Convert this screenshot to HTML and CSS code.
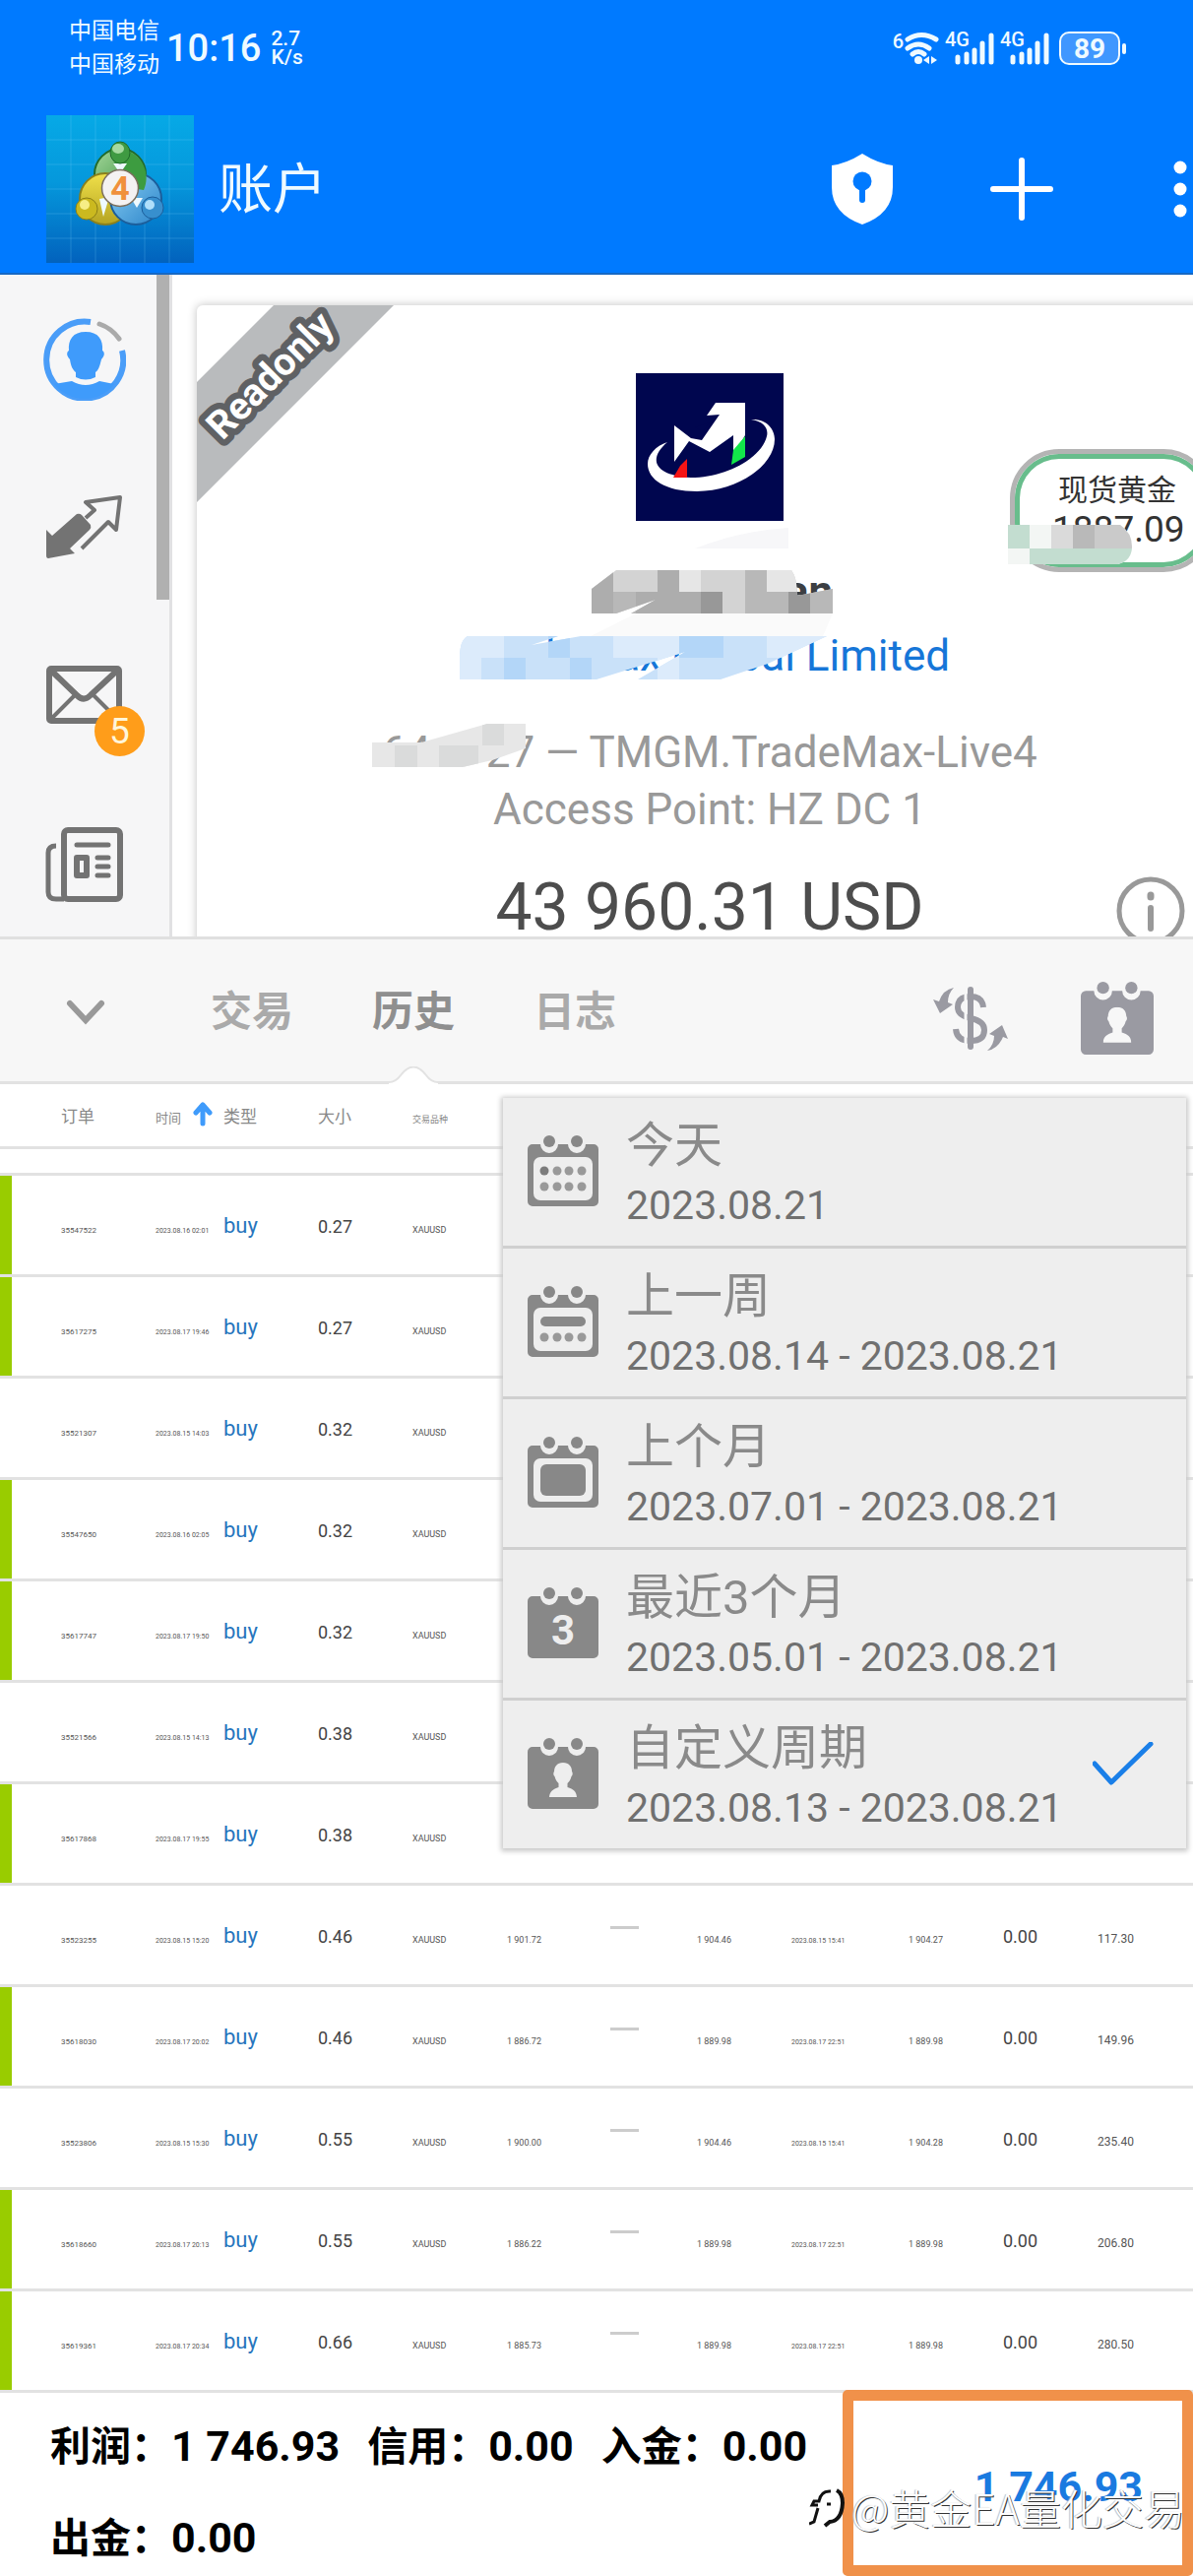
FILE: index.html
```html
<!DOCTYPE html>
<html lang="zh-CN">
<head>
<meta charset="utf-8">
<meta name="viewport" content="width=device-width, initial-scale=1">
<title>账户</title>
<link rel="stylesheet" href="styles.css">
</head>
<body>
<svg class="defs" aria-hidden="true">
  <defs>
    <linearGradient id="sky" x1="0" y1="0" x2="0" y2="1"><stop offset="0" stop-color="#06a9e6"/><stop offset=".45" stop-color="#0598dc"/><stop offset="1" stop-color="#0262bd"/></linearGradient>
    <linearGradient id="green" x1="0" y1="0" x2="1" y2="1"><stop offset="0" stop-color="#a5d79b"/><stop offset="1" stop-color="#2b8a35"/></linearGradient>
    <linearGradient id="gold" x1="0" y1="0" x2="0" y2="1"><stop offset="0" stop-color="#f0e04a"/><stop offset="1" stop-color="#b5a421"/></linearGradient>
    <linearGradient id="blue" x1="0" y1="0" x2="1" y2="1"><stop offset="0" stop-color="#8bd0f5"/><stop offset="1" stop-color="#2b84c9"/></linearGradient>
    <symbol id="cal" viewBox="0 0 72 72">
      <path d="M5 9h8a9 9 0 0 0 18 0h10a9 9 0 0 0 18 0h8a5 5 0 0 1 5 5v53a5 5 0 0 1-5 5H5a5 5 0 0 1-5-5V14a5 5 0 0 1 5-5z"/>
      <circle cx="22" cy="6" r="6"/><circle cx="50" cy="6" r="6"/>
    </symbol>
    <symbol id="bust" viewBox="0 0 28 36"><path d="M14 0c6 0 9 4 9 9 1 1 1 4-.5 5-1 4-3 6-4 7v4c6 2 9 4 9.500 10H0c.5-6 4-8 9.500-10v-4c-1-1-3-3-4-7-1.500-1-1.500-4-.5-5 0-5 3-9 9-9z"/></symbol>
    <symbol id="bars" viewBox="0 0 46 34">
      <path d="M9 26v5M18 23v8M26 19v12M34 12v19M43 4v27" fill="none" stroke="currentColor" stroke-width="5" stroke-linecap="round"/>
    </symbol>
  </defs>
</svg>

<header class="top">
  <div class="status">
    <div class="carriers"><span>中国电信</span><span>中国移动</span></div>
    <time class="clock">10:16</time>
    <div class="speed"><span>2.7</span><span>K/s</span></div>
    <div class="signals">
      <span class="wifi"><small>6</small>
        <svg width="36" height="34" viewBox="0 0 36 34"><g fill="none" stroke="currentColor" stroke-width="5" stroke-linecap="round"><path d="M4 8q14-9 29 0M4 17q11-8 22 0M9 23q6-5 12 0"/></g><circle cx="15" cy="29" r="4"/><path d="M26 25v8l-6-4zM28 25v8l6-4z"/></svg>
      </span>
      <span class="cell"><small>4G</small><svg width="46" height="34"><use href="#bars"/></svg></span>
      <span class="cell"><small>4G</small><svg width="46" height="34"><use href="#bars"/></svg></span>
      <span class="battery">89</span>
    </div>
  </div>
  <div class="appbar">
    <svg class="applogo" viewBox="0 0 150 150" aria-hidden="true">
      <path fill="url(#sky)" d="M0 0h150v150H0z"/>
      <path d="M25 0v150M50 0v150M75 0v150M100 0v150M125 0v150M0 25h150M0 50h150M0 75h150M0 100h150M0 125h150" stroke="#8fdcff" stroke-opacity=".22" fill="none"/>
      <circle cx="75" cy="60" r="26" fill="url(#green)" stroke="#236b2a" stroke-width="2"/>
      <circle cx="60" cy="85" r="26" fill="url(#gold)" stroke="#8a801c" stroke-width="2"/>
      <circle cx="91" cy="85" r="26" fill="url(#blue)" stroke="#1c5e9b" stroke-width="2"/>
      <path d="M84 37c15 6 22 24 15 39l-13-2c-2-14-9-22-18-25z" fill="#3d9c40"/>
      <path d="M54 85l10-2-6 20zM86 84h12l-6 10zM68 49h14l-7 10z" fill="#eefaff"/>
      <ellipse cx="75" cy="38" rx="10" ry="11" fill="#3f9a42" stroke="#1f6a2a"/><ellipse cx="73" cy="34" rx="6" ry="5" fill="#a5d9a0"/>
      <circle cx="41" cy="95" r="11" fill="#cbb91f" stroke="#8b7f17"/><circle cx="39" cy="91" r="5" fill="#f7ee86"/>
      <circle cx="108" cy="94" r="11" fill="#378fce" stroke="#1c5e9b"/><circle cx="105" cy="91" r="5" fill="#b0dffb"/>
      <circle cx="75" cy="74" r="18.500" fill="#f4f2f2" stroke="#7b6e5c" stroke-width="1.500"/>
      <text x="75" y="86" text-anchor="middle" class="logo-four">4</text>
    </svg>
    <h1>账户</h1>
    <div class="actions">
      <button type="button" aria-label="安全"><svg width="64" height="74" viewBox="0 0 64 74"><path fill="#fff" d="M32 1q16 10 31 12v22q0 27-31 38Q1 62 1 35V13Q16 11 32 1z"/><circle cx="32" cy="29" r="9.500" fill="#007aff"/><path d="M32 32v16" stroke="#007aff" stroke-width="6" stroke-linecap="round"/></svg></button>
      <button type="button" aria-label="添加"><svg width="64" height="64" viewBox="0 0 64 64"><path d="M32 3v58M3 32h58" stroke="#fff" stroke-width="6" stroke-linecap="round"/></svg></button>
      <button type="button" aria-label="更多"><svg width="14" height="58" viewBox="0 0 14 58" fill="#fff"><circle cx="7" cy="7" r="6.500"/><circle cx="7" cy="29" r="6.500"/><circle cx="7" cy="51" r="6.500"/></svg></button>
    </div>
  </div>
</header>

<main>
  <section class="pane">
    <nav class="side" aria-label="导航">
      <a href="#account" aria-label="账户"><svg width="84" height="84" viewBox="0 0 84 84">
        <path d="M48 4A39 39 0 1 0 80 33" fill="none" stroke="#4a9df8" stroke-width="6"/><path d="M57 6q12 4 20 15" fill="none" stroke="#aaa" stroke-width="5" stroke-linecap="round"/>
        <path fill="#3f9bfb" d="M43 14c13 0 18 8 17 19 3 2 2 6-1 9-2 8-3 11-6 13v5q-10 5-20 0v-5c-3-2-5-6-6-13-3-3-4-7-1-9-1-11 4-19 17-19zM11 67l18-3q14 8 28 0l15 3q-12 15-30 15T11 67z"/></svg></a>
      <a href="#trade" aria-label="交易"><svg width="78" height="68" viewBox="0 0 78 68"><path fill="#737373" d="M31 20q3-1 5 1l9 10q1 3-1 5L24 55l5 5-27 5q-2 0-2-3V36l6 6z"/><path fill="none" stroke="#737373" stroke-width="4" stroke-linejoin="round" d="M40 24l9-8-9-8 35-5-4 33-8-8-27 27"/></svg></a>
      <a class="mail" href="#mail" aria-label="邮箱"><svg width="78" height="60" viewBox="0 0 78 60" fill="none" stroke="#737373" stroke-width="6"><rect x="3" y="3" width="71" height="53" rx="2"/><path d="M4 4l27 26q7 7 14 0L73 4"/><path d="M4 55l25-25M73 55L48 30" stroke-width="4"/></svg><span class="badge">5</span></a>
      <a href="#news" aria-label="新闻"><svg width="80" height="76" viewBox="0 0 80 76"><g fill="none" stroke="#737373"><rect x="19" y="3" width="57" height="70" rx="4" stroke-width="6"/><path d="M11 19q-8 0-8 7v40q0 7 8 7h8" stroke-width="5"/><path d="M32 18h32M53 31h11M53 40h11M53 49h11" stroke-width="5" stroke-linecap="round"/><rect x="32" y="31" width="10" height="18" stroke-width="6" stroke-linejoin="round"/></g></svg></a>
    </nav>
    <div class="stage">
      <article class="card" id="account">
        <div class="ribbon"><svg width="200" height="200" viewBox="0 0 200 200"><path d="M78 0h122L0 200V78z" fill="#b9bbbd"/><text x="75" y="84" text-anchor="middle" transform="rotate(-45 75 72)">Readonly</text></svg></div>
        <svg class="broker" width="150" height="150" viewBox="0 0 150 150" aria-hidden="true">
          <path fill="#00064f" d="M0 0h150v150H0z"/>
          <path fill="#fff" fill-rule="evenodd" d="M117 47c16-1 24 10 24 20 0 27-38 53-79 53-32 0-50-12-50-28 0-9 8-18 20-22-20 17-14 34 24 36 35 0 72-20 77-42 2-8-3-15-16-17z"/>
          <path fill="#fff" d="M39 53l17 13 11 2 18-26-13 1 9-13h30v33l-12 21V63L75 80l-21-11-15 21z"/>
          <path fill="#00064f" d="M60 55l15-5-7 9z" opacity=".5"/>
          <path fill="#f51414" d="M52 87v19H38l7-12z"/><path fill="#12e64a" d="M111 64v21l-14 8 2-15z"/>
        </svg>
        <h2 class="owner"><span>an</span></h2>
        <a class="company" href="#company">TradeMax Global Limited</a>
        <p class="server">64<i class="masked"></i>27 — TMGM.TradeMax-Live4</p>
        <p class="point">Access Point: HZ DC 1</p>
        <div class="balance"><strong>43 960.31 USD</strong><button type="button" aria-label="信息"><svg width="70" height="70" viewBox="0 0 70 70" fill="none" stroke="#999" stroke-width="5"><circle cx="35" cy="35" r="32"/><path d="M35 32v21" stroke-width="6" stroke-linecap="round"/><path d="M35 19v2" stroke-width="7" stroke-linecap="round"/></svg></button></div>
      </article>
      <aside class="bubble"><span>现货黄金</span><span class="quote">1887.09</span></aside>
      <svg class="mosaic" width="1012" height="641" viewBox="200 310 1012 641" aria-hidden="true">
        <defs>
          <clipPath id="c1"><path d="M601 598l25-19h178q6 8 6 26l36-7v25h-205l25-14-40 14h-25z"/></clipPath>
          <clipPath id="c2"><path d="M467 668q0-18 8-22h92l-27 9 50-9h250l-60 28-48 16h-84l48-28-90 28H467z"/></clipPath>
          <clipPath id="c3"><path d="M378 754h50l67-19h39v25l-34 12-30 7H378z"/></clipPath>
          <clipPath id="c4"><path d="M1024 533h114q12 8 12 22t-14 18H1024z"/></clipPath>
        </defs>
        <path fill="#f7f7f9" d="M706 557q45-18 95-21v21z"/>
        <path fill="#fafafa" d="M646 623h200l-10 23H600z"/>
        <g clip-path="url(#c1)">
          <path fill="#d3d3d3" d="M601 579h250v44H601z"/><path fill="#adadad" d="M601 579h22v44h-22zM668 579h22v22h-22zM646 601h66v22h-66z"/><path fill="#e6e6e6" d="M690 579h22v22h-22zM779 579h30v22h-30z"/><path fill="#989898" d="M712 601h22v22h-22zM801 601h22v22h-22z"/><path fill="#b8b8b8" d="M757 579h22v22h-22zM757 601h44v22h-44zM823 598h23v25h-23zM623 601h23v22h-23z"/>
        </g>
        <g clip-path="url(#c2)">
          <path fill="#c9e1f9" d="M467 646h373v44H467z"/><path fill="#dcebfb" d="M467 646h45v22h-45zM623 646h67v22h-67zM467 668h22v22h-22zM779 646h61v22h-61zM668 668h22v22h-22z"/><path fill="#b3d6f8" d="M557 646h22v22h-22zM579 668h22v22h-22zM690 646h45v22h-45zM512 668h22v22h-22z"/>
        </g>
        <g clip-path="url(#c3)"><path fill="#e7e7e7" d="M378 734h156v45H378z"/><path fill="#dadbdb" d="M401 757h23v22h-23zM446 757h40v22h-40zM490 734h22v23h-22z"/></g>
        <g clip-path="url(#c4)"><path fill="#f3f6f4" d="M1024 533h130v40h-130z"/><path fill="#c3ddd0" d="M1024 533h22v24h-22zM1046 557h104v16h-104z"/><path fill="#dadada" d="M1068 533h22v24h-22z"/><path fill="#b9b9b9" d="M1090 533h22v24h-22z"/><path fill="#cacaca" d="M1112 533h38v24h-38z"/></g>
      </svg>
    </div>
  </section>

  <div class="tabbar">
    <button class="fold" type="button" aria-label="收起"><svg width="40" height="26" viewBox="0 0 40 26"><path d="M4 4l16 17L36 4" fill="none" stroke="#999" stroke-width="6" stroke-linecap="round"/></svg></button>
    <button class="tab" type="button">交易</button>
    <button class="tab active" type="button">历史<svg class="notch" width="50" height="18" viewBox="0 0 50 18"><path d="M0 16q7 0 12-7 13-17 26 0 5 7 12 7v2H0z" fill="#fff"/><path d="M0 16q7 0 12-7 13-17 26 0 5 7 12 7" fill="none" stroke="#e2e2e2" stroke-width="2"/></svg></button>
    <button class="tab" type="button">日志</button>
    <div class="tools">
      <button type="button" aria-label="货币"><svg width="76" height="66" viewBox="0 0 76 66"><g fill="none" stroke="#9a9aa2"><path d="M51 22q-1-11-13-11-13 0-13 11 0 8 13 11 14 3 14 12 0 11-14 11-14 0-15-12" stroke-width="6"/></g><path d="M33 6v56" stroke="#f7f7f7" stroke-width="3"/><path d="M38 4v58" stroke="#9a9aa2" stroke-width="6" stroke-linecap="round"/><path fill="#9a9aa2" d="M21 2Q15 8 15 17l5 2L7 28 0 14l6 2Q10 4 21 2zM55 66q7-6 7-15l-5-2 13-9 6 14-5-2q-5 12-16 14z"/></svg></button>
      <button type="button" aria-label="周期"><svg width="74" height="74" viewBox="0 0 72 72" fill="#9a9aa2"><use href="#cal"/><use href="#bust" x="22" y="25" width="28" height="36" fill="#f7f7f7"/></svg></button>
    </div>
  </div>

  <section class="history">
    <table>
      <colgroup><col class="w158"><col class="w69"><col class="w96"><col class="w96"><col class="w96"><col class="w105"><col class="w88"><col class="w96"><col class="w119"><col class="w96"><col class="w96"><col class="w97"></colgroup>
      <thead><tr><th>订单</th><th class="sort">时间<svg width="20" height="26" viewBox="0 0 20 26"><path d="M10 23V5M3 12l7-8 7 8" fill="none" stroke="#3f9bfb" stroke-width="5" stroke-linecap="round" stroke-linejoin="round"/></svg></th><th>类型</th><th>大小</th><th class="tiny">交易品种</th><th colspan="7"></th></tr></thead>
      <tbody>
        <tr class="gap"><td colspan="12"></td></tr>
        <tr class="win"><td>35547522</td><td class="date">2023.08.16 02:01</td><td class="buy">buy</td><td class="size">0.27</td><td>XAUUSD</td><td colspan="7"></td></tr>
        <tr class="win"><td>35617275</td><td class="date">2023.08.17 19:46</td><td class="buy">buy</td><td class="size">0.27</td><td>XAUUSD</td><td colspan="7"></td></tr>
        <tr><td>35521307</td><td class="date">2023.08.15 14:03</td><td class="buy">buy</td><td class="size">0.32</td><td>XAUUSD</td><td colspan="7"></td></tr>
        <tr class="win"><td>35547650</td><td class="date">2023.08.16 02:05</td><td class="buy">buy</td><td class="size">0.32</td><td>XAUUSD</td><td colspan="7"></td></tr>
        <tr class="win"><td>35617747</td><td class="date">2023.08.17 19:50</td><td class="buy">buy</td><td class="size">0.32</td><td>XAUUSD</td><td colspan="7"></td></tr>
        <tr><td>35521566</td><td class="date">2023.08.15 14:13</td><td class="buy">buy</td><td class="size">0.38</td><td>XAUUSD</td><td colspan="7"></td></tr>
        <tr class="win"><td>35617868</td><td class="date">2023.08.17 19:55</td><td class="buy">buy</td><td class="size">0.38</td><td>XAUUSD</td><td colspan="7"></td></tr>
        <tr><td>35523255</td><td class="date">2023.08.15 15:20</td><td class="buy">buy</td><td class="size">0.46</td><td>XAUUSD</td><td>1 901.72</td><td><i class="dash"></i></td><td>1 904.46</td><td class="date">2023.08.15 15:41</td><td>1 904.27</td><td class="size">0.00</td><td class="profit">117.30</td></tr>
        <tr class="win"><td>35618030</td><td class="date">2023.08.17 20:02</td><td class="buy">buy</td><td class="size">0.46</td><td>XAUUSD</td><td>1 886.72</td><td><i class="dash"></i></td><td>1 889.98</td><td class="date">2023.08.17 22:51</td><td>1 889.98</td><td class="size">0.00</td><td class="profit">149.96</td></tr>
        <tr><td>35523806</td><td class="date">2023.08.15 15:30</td><td class="buy">buy</td><td class="size">0.55</td><td>XAUUSD</td><td>1 900.00</td><td><i class="dash"></i></td><td>1 904.46</td><td class="date">2023.08.15 15:41</td><td>1 904.28</td><td class="size">0.00</td><td class="profit">235.40</td></tr>
        <tr class="win"><td>35618660</td><td class="date">2023.08.17 20:13</td><td class="buy">buy</td><td class="size">0.55</td><td>XAUUSD</td><td>1 886.22</td><td><i class="dash"></i></td><td>1 889.98</td><td class="date">2023.08.17 22:51</td><td>1 889.98</td><td class="size">0.00</td><td class="profit">206.80</td></tr>
        <tr class="win"><td>35619361</td><td class="date">2023.08.17 20:34</td><td class="buy">buy</td><td class="size">0.66</td><td>XAUUSD</td><td>1 885.73</td><td><i class="dash"></i></td><td>1 889.98</td><td class="date">2023.08.17 22:51</td><td>1 889.98</td><td class="size">0.00</td><td class="profit">280.50</td></tr>
      </tbody>
    </table>

    <div class="menu">
      <button type="button"><svg width="72" height="72" viewBox="0 0 72 72"><use href="#cal"/><rect x="6" y="22" width="60" height="44" rx="7" class="hole"/><g fill="#999"><circle cx="17" cy="36" r="4.500" fill="#7c7c7c"/><circle cx="30" cy="36" r="4.500"/><circle cx="42" cy="36" r="4.500"/><circle cx="55" cy="36" r="4.500"/><circle cx="17" cy="52" r="4.500"/><circle cx="30" cy="52" r="4.500"/><circle cx="42" cy="52" r="4.500"/><circle cx="55" cy="52" r="4.500"/></g></svg><span class="label"><b>今天</b><span>2023.08.21</span></span></button>
      <button type="button"><svg width="72" height="72" viewBox="0 0 72 72"><use href="#cal"/><rect x="6" y="22" width="60" height="44" rx="7" class="hole"/><rect x="13" y="31" width="46" height="10" rx="5"/><g fill="#999"><circle cx="17" cy="52" r="4.500"/><circle cx="30" cy="52" r="4.500"/><circle cx="42" cy="52" r="4.500"/><circle cx="55" cy="52" r="4.500"/></g></svg><span class="label"><b>上一周</b><span>2023.08.14 - 2023.08.21</span></span></button>
      <button type="button"><svg width="72" height="72" viewBox="0 0 72 72"><use href="#cal"/><rect x="6" y="22" width="60" height="44" rx="7" class="hole"/><rect x="13" y="28" width="46" height="32" rx="6"/></svg><span class="label"><b>上个月</b><span>2023.07.01 - 2023.08.21</span></span></button>
      <button type="button"><svg width="72" height="72" viewBox="0 0 72 72"><use href="#cal"/><text x="36" y="58" text-anchor="middle" class="three">3</text></svg><span class="label"><b>最近3个月</b><span>2023.05.01 - 2023.08.21</span></span></button>
      <button type="button" aria-pressed="true"><svg width="72" height="72" viewBox="0 0 72 72"><use href="#cal"/><use href="#bust" x="22" y="25" width="28" height="36" class="hole"/></svg><span class="label"><b>自定义周期</b><span>2023.08.13 - 2023.08.21</span></span><svg class="tick" width="62" height="44" viewBox="0 0 62 44"><path d="M2 22l17 19L59 2" fill="none" stroke="#1a7fe8" stroke-width="5" stroke-linecap="round" stroke-linejoin="round"/></svg></button>
    </div>
  </section>
</main>

<footer class="totals">
  <dl>
    <div><dt>利润：</dt><dd>1 746.93</dd></div>
    <div><dt>信用：</dt><dd>0.00</dd></div>
    <div><dt>入金：</dt><dd>0.00</dd></div>
    <div><dt>出金：</dt><dd>0.00</dd></div>
  </dl>
  <div class="sum">1 746.93</div>
  <div class="mark"><svg width="38" height="42" viewBox="0 0 38 42" fill="none" stroke="#111" stroke-width="3"><path d="M22 5q-10-1-12 10h-5l-2 4h6M9 22l-4 14-5 2M18 18h4"/><path d="M28 4q6 3 6 13-1 18-13 19l-5 4" stroke-width="4"/></svg><span>@黄金EA量化交易</span></div>
</footer>
</body>
</html>
```
FILE: styles.css
```css
* { box-sizing: border-box; }
body {
  margin: 0;
  background: #fff;
  color: #555;
  font-family: Roboto, "Noto Sans CJK SC", sans-serif;
  overflow-x: hidden;
}
button { border: 0; padding: 0; background: none; font: inherit; color: inherit; display: block; }
svg { display: block; }
h1, h2, p, dl, dd { margin: 0; }
.defs { position: absolute; width: 0; height: 0; }

/* header */
.top { background: #007aff; color: #effaff; padding: 15px 0 10px; border-bottom: 2px solid #1668c4; }
.status { display: flex; align-items: center; height: 68px; padding: 0 69px 0 70px; }
.carriers { display: flex; flex-direction: column; font-size: 23px; line-height: 34px; }
.clock { margin-left: 7px; font-size: 38px; font-weight: 500; }
.speed { display: flex; flex-direction: column; margin-left: 10px; font-size: 21px; line-height: 19px; font-weight: 500; }
.signals { display: flex; align-items: center; margin-left: auto; fill: currentColor; gap: 10px; }
.signals small { font-size: 20px; line-height: 20px; font-weight: 500; }
.wifi { display: flex; align-items: flex-start; }
.cell { position: relative; width: 46px; }
.cell small { position: absolute; left: -4px; top: -2px; }
.battery { position: relative; width: 62px; height: 34px; margin-right: 5px; border: 2px solid #effaff; border-radius: 10px; background: #3f97ff; font-size: 28px; line-height: 31px; font-weight: 700; text-align: center; }
.battery::after { content: ""; position: absolute; right: -8px; top: 10px; width: 4px; height: 11px; border-radius: 2px; background: #effaff; }
.appbar { display: flex; align-items: center; margin-top: 34px; padding: 0 6px 0 47px; }
.applogo { width: 150px; height: 150px; }
.logo-four { font: 700 34px Roboto, sans-serif; fill: #f0903c; }
h1 { margin-left: 25px; font-size: 55px; line-height: 72px; font-weight: 400; }
.actions { display: flex; align-items: center; margin-left: auto; }
.actions button:nth-child(2) { margin: 0 122px 0 98px; }

/* account pane */
.pane { display: grid; grid-template-columns: 175px minmax(0, 1fr); height: 672px; overflow: hidden; }
.side { position: relative; display: flex; flex-direction: column; align-items: center; padding: 44px 0 0; background: #f6f6f7; border-right: 3px solid #e1e1e3; }
.side::after { content: ""; position: absolute; right: 0; top: 0; width: 13px; height: 330px; background: #b0b0b0; }
.side a:nth-child(2) { margin-top: 95px; }
.side a:nth-child(3) { margin-top: 106px; }
.side a:nth-child(4) { margin-top: 104px; }
.mail { position: relative; }
.badge { position: absolute; left: 49px; top: 41px; width: 51px; height: 51px; border-radius: 50%; background: #ff9d1a; color: #fff6da; font-size: 37px; line-height: 51px; text-align: center; }
.stage { position: relative; padding: 31px 0 0 25px; overflow: hidden; }
.card { position: relative; display: flex; flex-direction: column; align-items: center; width: calc(100% + 30px); height: 700px; padding-top: 69px; border-radius: 6px 6px 0 0; background: #fff; box-shadow: 0 0 9px 1px #ccc; white-space: nowrap; font-size: 44px; }
.ribbon { position: absolute; left: 0; top: 0; }
.ribbon text { font: 700 39px Roboto, sans-serif; fill: #fff; stroke: #5f6164; stroke-width: 13px; stroke-linejoin: round; paint-order: stroke; }
.owner { width: 100%; margin-top: 42px; padding-left: 598px; font-size: 44px; line-height: 60px; color: #3c3f43; }
.company { margin-top: 5px; line-height: 60px; color: #1676d8; text-decoration: none; }
.server { margin-top: 39px; line-height: 58px; color: #999; }
.masked { display: inline-block; width: 56px; }
.point { line-height: 58px; color: #999; }
.balance { display: grid; grid-template-columns: 1fr auto 1fr; align-items: start; width: 100%; margin-top: 33px; }
.balance strong { grid-column: 2; font-size: 66px; line-height: 76px; font-weight: 400; color: #4d4d4d; }
.balance button { justify-self: end; margin: 6px 38px 0 0; }
.bubble { position: absolute; right: -20px; top: 177px; width: 206px; height: 125px; display: flex; flex-direction: column; align-items: flex-start; padding: 15px 0 0 34px; border: 5px solid #b4b4b4; border-radius: 50px; background: #fff; box-shadow: inset 0 0 0 5px #68bd8c; color: #333; font-size: 30px; line-height: 44px; }
.bubble span { margin-left: 10px; }
.bubble .quote { margin-left: 4px; font-size: 37px; line-height: 36px; }
.mosaic { position: absolute; left: 25px; top: 31px; }

/* tabs */
.tabbar { display: flex; align-items: center; height: 150px; padding: 4px 40px 0 67px; background: #f7f7f7; border-top: 3px solid #e0e0e0; border-bottom: 3px solid #e2e2e2; }
.fold { margin-right: 107px; }
.tab { position: relative; margin-right: 80px; font-size: 42px; line-height: 62px; font-weight: 700; color: #aaa; }
.tab.active { color: #8f8f8f; }
.notch { position: absolute; left: 17px; bottom: -42px; }
.tools { display: flex; align-items: center; margin-left: auto; gap: 74px; padding-top: 12px; }

/* order table */
.history { position: relative; }
table { width: 100%; table-layout: fixed; border-collapse: separate; border-spacing: 0; }
.w158 { width: 158px; } .w69 { width: 69px; } .w96 { width: 96px; } .w105 { width: 105px; }
.w88 { width: 88px; } .w119 { width: 119px; } .w97 { width: 97px; }
th, td { padding: 0; border-bottom: 3px solid #e2e2e2; text-align: left; font-weight: 400; white-space: nowrap; vertical-align: baseline; }
th { height: 66px; padding-top: 17px; font-size: 17px; line-height: 26px; color: #888; }
th.sort { font-size: 13px; }
.sort svg { display: inline-block; margin-left: 12px; vertical-align: -4px; }
th.tiny { font-size: 9px; }
td { height: 103px; padding-top: 38px; font-size: 9px; line-height: 26px; }
th:first-child, td:first-child { padding-left: 62px; }
td:first-child { font-size: 8px; }
.win td:first-child { box-shadow: inset 12px 0 #99cc00; }
.gap td { height: 27px; padding: 0; }
.date { font-size: 7px; }
.buy { font-size: 22px; color: #2775bd; }
.size { font-size: 18px; color: #444; }
.profit { font-size: 12px; }
.dash { display: inline-block; width: 29px; height: 3px; background: #ccc; vertical-align: 14px; }

/* period menu */
.menu { position: absolute; top: 14px; right: 7px; width: 694px; background: #eee; box-shadow: 0 1px 5px 2px #c8c8c8; }
.menu button { display: flex; align-items: flex-start; width: 100%; height: 153px; padding: 38px 33px 0 25px; border-bottom: 3px solid #cfcfcf; text-align: left; fill: #888; }
.menu button:last-child { height: 150px; border-bottom: 0; }
.menu .hole { fill: #eee; }
.three { font: 700 42px Roboto, sans-serif; fill: #eee; }
.label { display: flex; flex-direction: column; margin: -21px 0 0 28px; font-size: 41px; line-height: 56px; color: #707070; }
.label b { font-size: 49px; line-height: 64px; font-weight: 400; color: #8a8a8a; }
.menu .tick { margin: 4px 0 0 auto; }

/* totals */
.totals { position: relative; display: flex; align-items: stretch; color: #000; font-size: 43px; line-height: 60px; font-weight: 700; white-space: nowrap; }
dl { flex: 1; display: flex; flex-wrap: wrap; gap: 33px 28px; padding: 24px 0 9px 51px; }
dl div { display: flex; align-items: baseline; height: 60px; }
dt { font-size: 41px; }
.sum { width: 356px; margin-top: -3px; padding: 57px 40px 0 0; border: 11px solid #f0914a; border-radius: 5px; color: #1a7ae0; text-align: right; }
.mark { position: absolute; right: 8px; bottom: 40px; display: flex; align-items: center; gap: 5px; color: #fff; font: 300 42px/60px "Noto Sans CJK SC", sans-serif; text-shadow: 1px 1px 0 #333, -1px 0 1px #bbb; }
```
